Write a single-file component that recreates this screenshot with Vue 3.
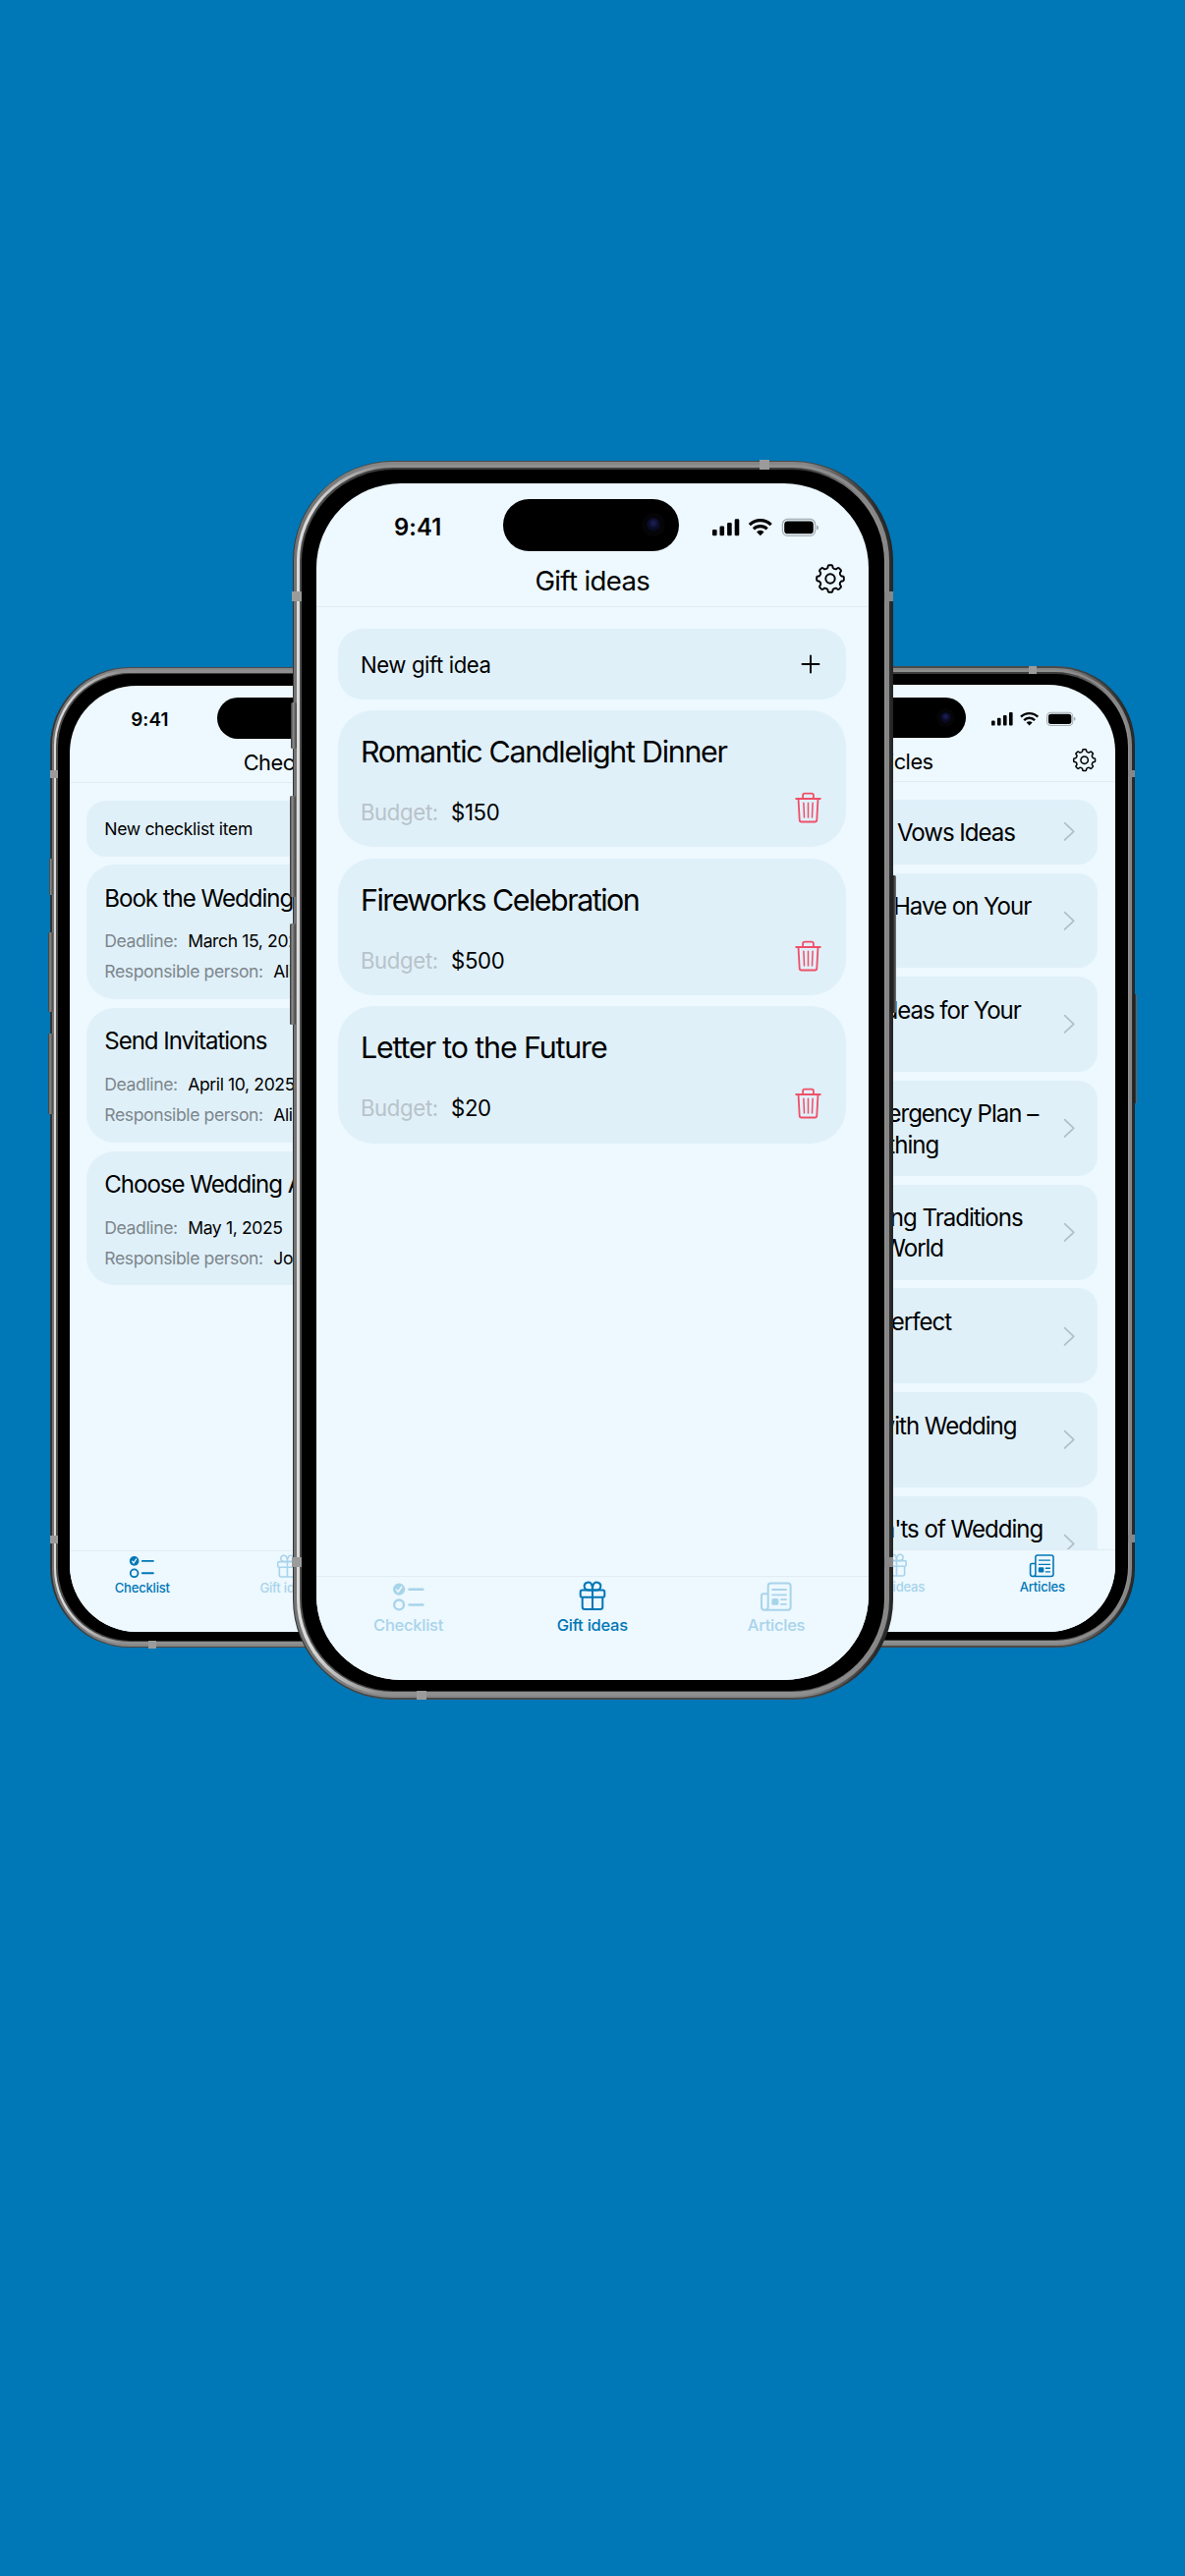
<script setup>
const tabs = [
  { id: 'checklist', label: 'Checklist' },
  { id: 'gifts', label: 'Gift ideas' },
  { id: 'articles', label: 'Articles' },
]

const phones = [
  {
    id: 'checklist',
    side: 'left',
    title: 'Checklist',
    add: 'New checklist item',
    cards: [
      { title: 'Book the Wedding Venue', rows: [['Deadline:', 'March 15, 2025'], ['Responsible person:', 'Alice']] },
      { title: 'Send Invitations', rows: [['Deadline:', 'April 10, 2025'], ['Responsible person:', 'Alice']] },
      { title: 'Choose Wedding Attire', rows: [['Deadline:', 'May 1, 2025'], ['Responsible person:', 'John']] },
    ],
  },
  {
    id: 'articles',
    side: 'right',
    title: 'Articles',
    articles: [
      [['Romantic Wedding Vows Ideas', 387]],
      [['Things to Have on Your', 407.6], ['Wedding Day', 170]],
      [['Creative Ideas for Your', 394.5], ['Wedding', 120]],
      [['Wedding Emergency Plan –', 416.4], ['Prepare for Everything', 288.8]],
      [['Unusual Wedding Traditions', 396.8], ['Around the World', 295]],
      [['Planning the Perfect', 305], ['Honeymoon', 160]],
      [['How to Deal with Wedding', 389], ['Stress', 100]],
      [["Do's and Don'ts of Wedding", 422.7], ['Planning', 120]],
    ],
  },
  {
    id: 'gifts',
    side: 'front',
    title: 'Gift ideas',
    add: 'New gift idea',
    cards: [
      { title: 'Romantic Candlelight Dinner', rows: [['Budget:', '$150']] },
      { title: 'Fireworks Celebration', rows: [['Budget:', '$500']], track: -1.5 },
      { title: 'Letter to the Future', rows: [['Budget:', '$20']], track: -1.15 },
    ],
  },
]

// Smooth outline of an eight-toothed cog centred on the origin
const gear = (() => {
  const pt = (r, deg) => {
    const t = deg * Math.PI / 180
    return `${(r * Math.cos(t)).toFixed(2)} ${(r * Math.sin(t)).toFixed(2)}`
  }
  let d = ''
  for (let i = 0; i < 8; i++) {
    const b = i * 45 - 90
    d += `${i ? 'L' : 'M'}${pt(11.6, b - 12.5)}L${pt(12.8, b - 11)}Q${pt(13.9, b - 10)} ${pt(13.9, b - 6)}`
    d += `L${pt(13.9, b + 6)}Q${pt(13.9, b + 10)} ${pt(12.8, b + 11)}L${pt(11.6, b + 12.5)}Q${pt(10.1, b + 22.5)} ${pt(11.6, b + 32.5)}`
  }
  return d + 'Z'
})()
</script>

<template>
  <main class="stage">
    <div v-for="p in phones" :key="p.id" class="slot" :class="p.side">
      <div class="phone" :class="'is-' + p.id">
        <i class="btn b1"></i><i class="btn b2"></i><i class="btn b3"></i><i class="btn b4"></i>
        <div class="ring r1"><div class="ring r2"><div class="ring r3"><div class="ring r4">
          <div class="bezel">
            <div class="screen">
              <div class="status">
                <span class="time">9:41</span>
                <span class="island"><i class="lens"></i></span>
                <svg class="signals" width="110" height="20" viewBox="0 0 110 20">
                  <rect x="0" y="12" width="4.6" height="6.3" rx="1.3" />
                  <rect x="7.5" y="8.4" width="4.6" height="9.9" rx="1.3" />
                  <rect x="15.1" y="5" width="4.6" height="13.3" rx="1.3" />
                  <rect x="22.7" y="1.3" width="4.6" height="17" rx="1.3" />
                  <g fill="none" stroke="#000" stroke-width="3.1">
                    <path d="M37.9 7.1A15.6 15.6 0 0 1 59.7 7.1" />
                    <path d="M41.9 11.4A9.9 9.9 0 0 1 55.7 11.4" />
                  </g>
                  <path d="M48.8 18.2L45 14.4A5.4 5.4 0 0 1 52.6 14.4Z" />
                  <rect x="71.4" y="1.5" width="33.2" height="16.8" rx="5" fill="none" stroke="#a5adb2" stroke-width="1.3" />
                  <rect x="73.2" y="3.5" width="29.6" height="12.8" rx="3.4" />
                  <path d="M106 7.4Q108.2 8.3 108.2 9.9Q108.2 11.5 106 12.4Z" fill="#a5adb2" />
                </svg>
              </div>
              <header class="header">
                <h1>{{ p.title }}</h1>
                <svg class="gear" width="32" height="32" viewBox="-16 -16 32 32" fill="none" stroke="#000" stroke-width="1.9" stroke-linejoin="round">
                  <path :d="gear" />
                  <circle r="4.7" />
                </svg>
              </header>
              <section class="list">
                <div v-if="p.add" class="add">
                  <span>{{ p.add }}</span>
                  <svg width="20" height="20" viewBox="0 0 20 20" stroke="#000" stroke-width="1.9" stroke-linecap="round"><path d="M10 1.5V18.5M1.5 10H18.5" /></svg>
                </div>
                <article v-for="c in p.cards" :key="c.title" class="card">
                  <h2 :style="{ letterSpacing: (c.track ?? -1.28) + 'px' }">{{ c.title }}</h2>
                  <div v-for="(r, i) in c.rows" :key="i" class="row">
                    <span class="label">{{ r[0] }}</span><span class="value">{{ r[1] }}</span>
                    <svg v-if="p.id === 'gifts'" class="trash" width="27" height="32" viewBox="0 0 27 32" fill="none" stroke="#f04f69" stroke-width="1.8" stroke-linecap="round" stroke-linejoin="round">
                      <path d="M1.2 7H25.8M3.5 7L4.7 28.6Q4.8 30.5 6.7 30.5H20.3Q22.2 30.5 22.3 28.6L23.5 7M8.1 6.7V3.6Q8.1 1.7 10 1.7H17Q18.9 1.7 18.9 3.6V6.7" />
                      <path d="M8.9 11.3L9.5 25.9M13.5 11.3V25.9M18.1 11.3L17.5 25.9" stroke-width="1.5" />
                    </svg>
                  </div>
                </article>
                <article v-for="(a, i) in p.articles" :key="i" class="card article">
                  <div>
                    <p v-for="l in a" :key="l[0]" :style="{ width: l[1] + 'px' }">{{ l[0] }}</p>
                  </div>
                  <svg width="16" height="26" viewBox="0 0 16 26" fill="none" stroke="#b3bfc6" stroke-width="2.2" stroke-linecap="round" stroke-linejoin="round"><path d="M2 2L13.6 13L2 24" /></svg>
                </article>
              </section>
              <nav class="tabs">
                <div v-for="t in tabs" :key="t.id" class="tab" :class="{ active: t.id === p.id }">
                  <svg v-if="t.id === 'checklist'" width="34" height="32" viewBox="0 0 34 32" fill="none" stroke="currentColor" stroke-width="2.5" stroke-linecap="round">
                    <circle cx="7.1" cy="8.7" r="6.1" fill="currentColor" stroke="none" />
                    <path d="M4.5 9.1L6.3 11.2L9.7 6.3" stroke="#edf8ff" stroke-width="1.6" />
                    <circle cx="7.1" cy="24.4" r="4.9" stroke-width="2.3" />
                    <path d="M17.5 8.7H31.4M17.5 24.4H31.4" />
                  </svg>
                  <svg v-else-if="t.id === 'gifts'" width="34" height="32" viewBox="0 0 34 32" fill="none" stroke="currentColor" stroke-width="2" stroke-linejoin="round">
                    <rect x="4.7" y="9.6" width="24.6" height="7.2" rx="1.8" />
                    <path d="M6.7 16.8V26.6Q6.7 29.1 9.2 29.1H24.8Q27.3 29.1 27.3 26.6V16.8M17 9.6V29.1" />
                    <path d="M17 9.4H12.4A3.9 3.9 0 1 1 16.3 4.4Q17 6 17 9.4ZM17 9.4H21.6A3.9 3.9 0 1 0 17.7 4.4Q17 6 17 9.4Z" />
                  </svg>
                  <svg v-else width="34" height="32" viewBox="0 0 34 32" fill="none" stroke="currentColor" stroke-width="2" stroke-linecap="round">
                    <path d="M8.7 26.4V5.2Q8.7 2.5 11.4 2.5H28.9Q31.6 2.5 31.6 5.2V27Q31.6 29.7 28.9 29.7H5Q2 29.7 2 26.7V15.3Q2 13.3 4 13.3H8.7M8.7 26.4Q8.7 29.7 5.3 29.7" />
                    <path d="M13.2 9H27M13.2 14.4H27M22 19.2H27M22 23.9H27" stroke-width="1.8" />
                    <rect x="12.4" y="18" width="7" height="6.8" rx="1.6" fill="currentColor" stroke="none" />
                  </svg>
                  <span>{{ t.label }}</span>
                </div>
              </nav>
            </div>
          </div>
        </div></div></div></div>
        <i class="band t"></i><i class="band b"></i>
        <i class="band l up"></i><i class="band l down"></i>
        <i class="band r up"></i><i class="band r down"></i>
      </div>
    </div>
  </main>
</template>

<style>
html, body { margin: 0; background: #0077b6; }
</style>

<style scoped>
.stage {
  position: relative;
  width: 1206px;
  height: 2622px;
  overflow: hidden;
  background: #0077b6;
  font-family: Inter, "Liberation Sans", sans-serif;
  color: #000;
}
.slot { position: absolute; }
.left { left: 51.3px; top: 679px; }
.right { left: 671px; top: 678.3px; }
.front { left: 297.5px; top: 468.6px; }
.phone { position: relative; width: 611.5px; height: 1261.3px; }
.left .phone, .right .phone { zoom: 0.7915; }

/* metal frame, drawn as nested rings from the outside in */
.ring { box-sizing: border-box; height: 100%; background: linear-gradient(to right, var(--a) 2%, var(--m) 14%, var(--m) 86%, var(--z) 98%); }
.r1 { --a: #353535; --m: #4a4a4a; --z: #262626; padding: 1.6px; border-radius: 102px; }
.r2 { --a: #747474; --m: #868686; --z: #2b2b2b; padding: 2.8px; border-radius: 100px; }
.r3 { --a: #dadada; --m: #8f8f8f; --z: #868686; padding: 3.4px; border-radius: 98px; }
.r4 { --a: #4c4c4c; --m: #3c3c3c; --z: #929292; padding: 1.4px; border-radius: 95px; }
.bezel { box-sizing: border-box; height: 100%; padding: 14.3px 16.2px 10.9px 15.3px; border-radius: 94px; background: #000; }
.screen {
  display: flex;
  flex-direction: column;
  height: 100%;
  border-radius: 86px;
  overflow: hidden;
  background: #edf8ff;
}
.btn { position: absolute; left: -3px; width: 6px; border-radius: 1.5px; background: linear-gradient(to right, #333, #8a8a8a 40%, #444); }
.b1 { top: 246.6px; height: 46.4px; left: -2px; }
.b2 { top: 341px; height: 103px; }
.b3 { top: 471.5px; height: 103px; }
.b4 { top: 422px; height: 140px; left: auto; right: -3px; background: linear-gradient(to right, #222 50%, #777); }
.band { position: absolute; background: #9b9b9b; }
.band.l, .band.r { width: 9.4px; height: 10px; }
.band.l { left: -0.3px; }
.band.r { right: -0.3px; background: #878787; }
.band.up { top: 133px; }
.band.down { top: 1116.7px; }
.band.t, .band.b { width: 10px; height: 9.4px; }
.band.t { top: -0.3px; left: 475.5px; }
.band.b { bottom: -0.3px; left: 126.5px; }

.status { display: flex; align-items: center; height: 84.8px; flex: none; }
.time { width: 111.3px; margin-left: 79px; padding-top: 5.4px; font-size: 23.8px; font-weight: 600; letter-spacing: 0.1px; line-height: 28px; }
.island { display: flex; align-items: center; justify-content: flex-end; box-sizing: border-box; width: 179px; height: 52.2px; padding-right: 19px; border-radius: 27px; background: #000; flex: none; }
.lens { width: 14px; height: 14px; border-radius: 50%; background: radial-gradient(circle at 50% 40%, #1a1d52 0 10%, #0b0c28 45%, #040512 100%); box-shadow: 0 0 0 5px #050406; }
.signals { margin: 4.8px 0 0 33.7px; flex: none; }
.header { position: relative; display: flex; align-items: center; justify-content: center; box-sizing: border-box; height: 41px; padding-bottom: 12px; border-bottom: 1.7px solid #e0ecf2; flex: none; }
h1 { margin: 0; font-size: 27.6px; font-weight: 400; line-height: 28px; letter-spacing: -0.65px; white-space: nowrap; }
.gear { position: absolute; right: 23px; top: -3.4px; }

.list { display: flex; flex-direction: column; gap: 11.2px; flex: 1; min-height: 0; overflow: hidden; padding: 22px 22.4px 0; }
.add, .card { box-sizing: border-box; flex: none; background: #e0f0f9; padding: 0 23.4px 0 22.6px; }
.add { display: flex; align-items: center; justify-content: space-between; height: 72px; padding: 1px 26px 0 22.6px; border-radius: 25px; font-size: 22.2px; letter-spacing: -0.42px; }
.card { padding-top: 23.3px; padding-bottom: 16px; border-radius: 36px; }
h2, p { margin: 0; font-size: 30.4px; font-weight: 400; line-height: 39.2px; letter-spacing: -1.28px; white-space: nowrap; }
.row { display: flex; align-items: center; height: 39.2px; font-size: 22.2px; letter-spacing: -0.48px; white-space: nowrap; }
h2 + .row { margin-top: 15.9px; }
.is-gifts .row { letter-spacing: -0.36px; }
.is-gifts h2 + .row { margin-top: 21.7px; }
.label { color: #7c868c; }
.is-gifts .label { color: #b8c3c9; }
.value { margin-left: 13.2px; }
.trash { margin: -9px 1.6px 0 auto; }
.article { display: flex; align-items: center; justify-content: space-between; padding: 22px 28.6px 22px 23.4px; border-radius: 25px; }
.article div { padding: 1.4px 0 0; margin-bottom: -1.4px; }
.article p { display: flex; justify-content: flex-end; }
.article svg { flex: none; }

.tabs { display: flex; box-sizing: border-box; height: 105.9px; padding-top: 4px; border-top: 1.7px solid #e0ecf2; background: #edf8ff; flex: none; }
.tab { display: flex; flex: 1; flex-direction: column; align-items: center; gap: 2.6px; color: #a8d4ea; font-size: 16.5px; line-height: 20px; font-weight: 450; letter-spacing: -0.25px; }
.tab.active { color: #0077b6; font-weight: 500; }
</style>
